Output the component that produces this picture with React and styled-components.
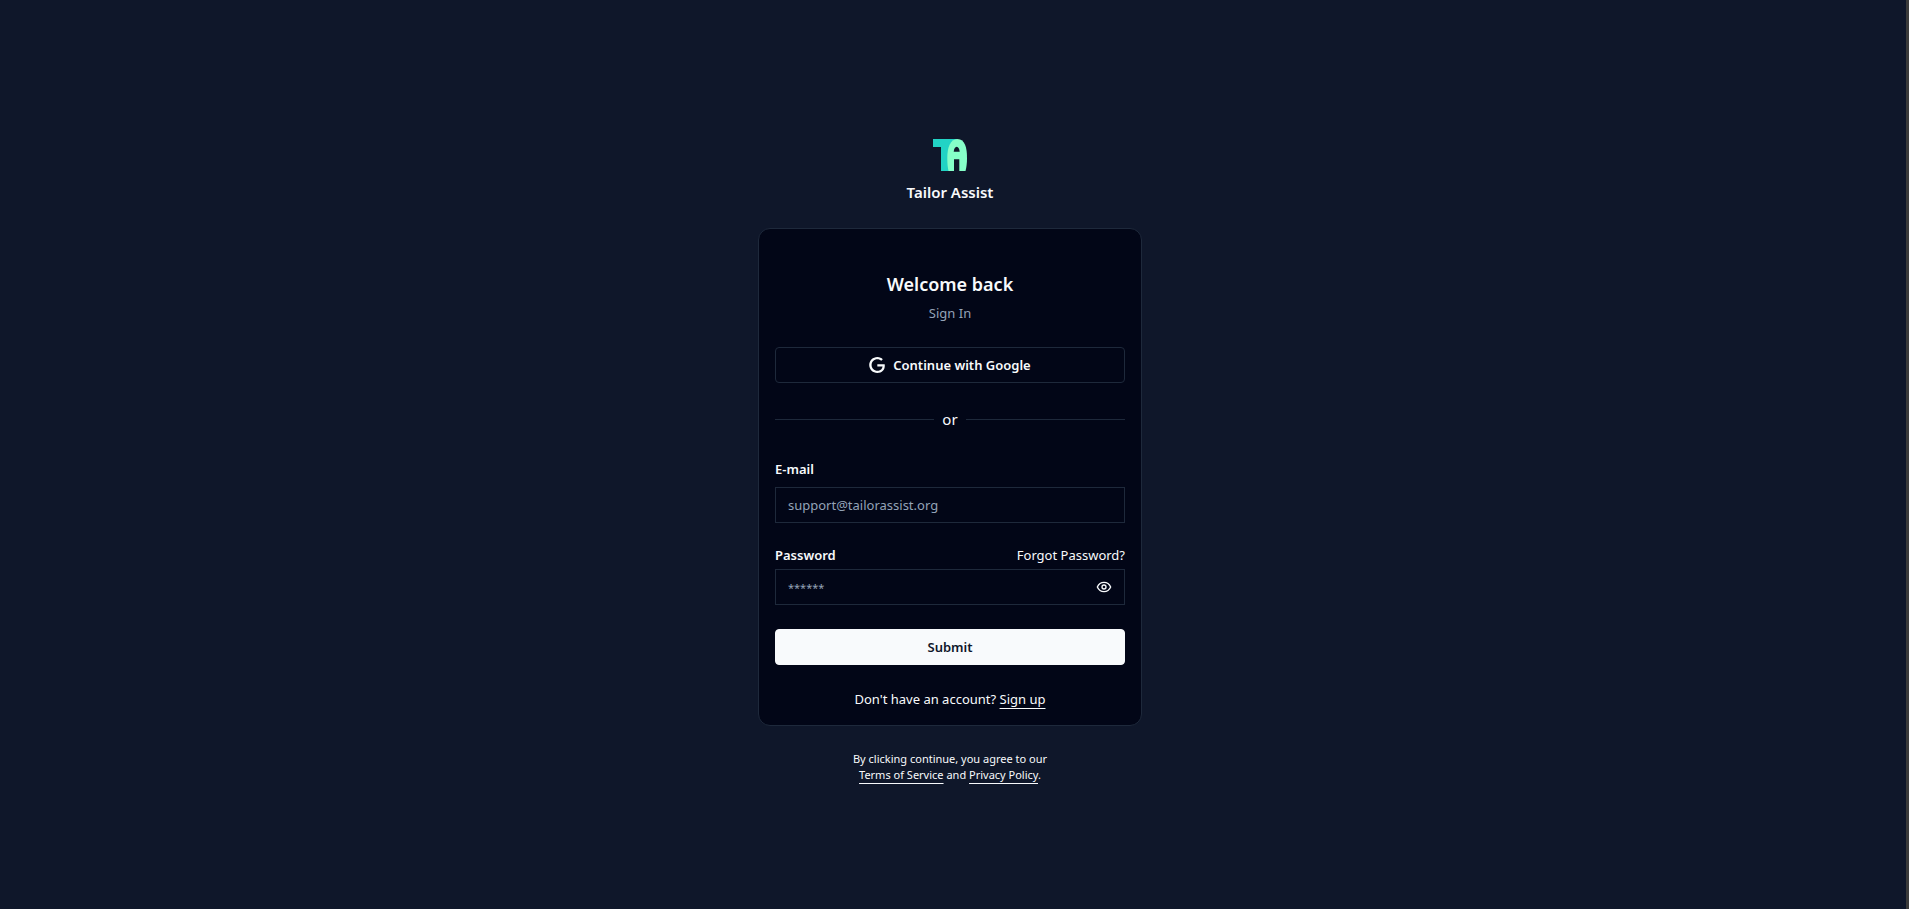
import React, { useState } from 'react';
import styled, { createGlobalStyle, ThemeProvider } from 'styled-components';

const theme = {
  color: {
    page: '#0f172a',
    card: '#020617',
    border: '#1e293b',
    text: '#f8fafc',
    muted: '#94a3b8',
    track: '#3b3b3b',
    teal: '#22d3c5',
    mint: '#86ffc8',
  },
};

const GlobalStyle = createGlobalStyle`
  * {
    box-sizing: border-box;
  }

  body {
    margin: 0;
    background: ${theme.color.page};
    color: ${theme.color.text};
    font-family: 'Segoe UI', 'Noto Sans', sans-serif;
    font-size: 13px;
    line-height: 20px;
  }
`;

const Page = styled.main`
  min-height: 100vh;
  display: flex;
  flex-direction: column;
  align-items: center;
  justify-content: center;
  padding: 12px 6px 0 0;
  border-right: 3px solid ${({ theme }) => theme.color.track};
`;

const Brand = styled.div`
  display: flex;
  flex-direction: column;
  align-items: center;
  gap: 8px;
  margin-bottom: 24px;
`;

const BrandName = styled.span`
  font-size: 15px;
  font-weight: 600;
  line-height: 24px;
`;

const Card = styled.section`
  width: 100%;
  max-width: 384px;
  padding: 40px 16px 16px;
  background: ${({ theme }) => theme.color.card};
  border: 1px solid ${({ theme }) => theme.color.border};
  border-radius: 12px;
`;

const CardHeader = styled.header`
  display: flex;
  flex-direction: column;
  gap: 4px;
  margin-bottom: 24px;
  text-align: center;
`;

const Title = styled.h1`
  margin: 0;
  font-size: 18px;
  font-weight: 600;
  line-height: 30px;
`;

const Subtitle = styled.p`
  margin: 0;
  color: ${({ theme }) => theme.color.muted};
`;

const Button = styled.button`
  display: flex;
  align-items: center;
  justify-content: center;
  gap: 8px;
  width: 100%;
  height: 36px;
  border: 1px solid ${({ theme, $primary }) => ($primary ? theme.color.text : theme.color.border)};
  border-radius: 4px;
  background: ${({ theme, $primary }) => ($primary ? theme.color.text : 'transparent')};
  color: ${({ theme, $primary }) => ($primary ? theme.color.page : theme.color.text)};
  font-family: inherit;
  font-size: 13px;
  font-weight: 600;
  cursor: pointer;
`;

const Divider = styled.div`
  display: flex;
  align-items: center;
  gap: 8px;
  margin: 24px 0 28px;
  font-size: 15px;
  line-height: 24px;

  &::before,
  &::after {
    content: '';
    flex: 1;
    height: 1px;
    background: ${({ theme }) => theme.color.border};
  }
`;

const Form = styled.form`
  display: flex;
  flex-direction: column;
  gap: 24px;
`;

const Fields = styled.div`
  display: flex;
  flex-direction: column;
  gap: 22px;
`;

const Field = styled.div`
  display: flex;
  flex-direction: column;
  gap: ${({ $gap }) => $gap}px;
`;

const LabelRow = styled.div`
  display: flex;
  justify-content: space-between;
`;

const Label = styled.label`
  font-weight: 600;
`;

const ForgotLink = styled.a`
  color: inherit;
  text-decoration: none;
`;

const InputBox = styled.div`
  display: flex;
  align-items: center;
  height: 36px;
  padding: 0 12px;
  border: 1px solid ${({ theme }) => theme.color.border};
`;

const Input = styled.input`
  flex: 1;
  min-width: 0;
  padding: 0;
  border: 0;
  outline: 0;
  background: transparent;
  color: inherit;
  font-family: inherit;
  font-size: 13px;

  &::placeholder {
    color: ${({ theme }) => theme.color.muted};
    font-size: ${({ $small }) => ($small ? 11 : 13)}px;
    opacity: 1;
  }
`;

const IconButton = styled.button`
  display: flex;
  padding: 0;
  border: 0;
  background: transparent;
  color: inherit;
  cursor: pointer;
`;

const SignUp = styled.p`
  margin: 24px 0 0;
  text-align: center;
`;

const TextLink = styled.a`
  color: inherit;
  text-decoration: underline;
  text-decoration-thickness: 1px;
  text-underline-offset: 4px;
  text-decoration-skip-ink: none;
`;

const Terms = styled.p`
  margin: 25px 0 0;
  font-size: 11px;
  line-height: 16px;
  text-align: center;
`;

const Logo = () => (
  <svg width="36" height="34" viewBox="0 0 36 34" aria-hidden="true">
    <path fill={theme.color.teal} d="M1 1h24v32H9V9H1z" />
    <path
      fill={theme.color.mint}
      d="M16.500 33C15.800 30 15.300 26 15.300 20 15.300 10 18 1 25.500 1S35 10 35 20c0 5-.5 9-1.500 13z"
    />
    <path fill={theme.color.page} d="M21.700 13.700c.3-2.700 1.300-5 3-5s2.700 2.300 3 5zM22 21.300h5.300V33H22z" />
  </svg>
);

const GoogleIcon = () => (
  <svg width="16" height="16" viewBox="0 0 24 24" fill="currentColor" aria-hidden="true">
    <path d="M12.480 10.920v3.280h7.840c-.24 1.840-.853 3.187-1.787 4.133-1.147 1.147-2.933 2.400-6.053 2.400-4.827 0-8.600-3.893-8.600-8.720s3.773-8.720 8.600-8.720c2.600 0 4.507 1.027 5.907 2.347l2.307-2.307C18.747 1.440 16.133 0 12.480 0 5.867 0 .307 5.387.307 12s5.560 12 12.173 12c3.573 0 6.267-1.173 8.373-3.360 2.160-2.160 2.840-5.213 2.840-7.667 0-.76-.053-1.467-.173-2.053H12.480z" />
  </svg>
);

const EyeIcon = () => (
  <svg
    width="16"
    height="16"
    viewBox="0 0 24 24"
    fill="none"
    stroke="currentColor"
    strokeWidth="2"
    strokeLinecap="round"
    strokeLinejoin="round"
    aria-hidden="true"
  >
    <path d="M2 12s3-7 10-7 10 7 10 7-3 7-10 7-10-7-10-7Z" />
    <circle cx="12" cy="12" r="3" />
  </svg>
);

const App = () => {
  const [visible, setVisible] = useState(false);

  return (
    <ThemeProvider theme={theme}>
      <GlobalStyle />
      <Page>
        <Brand>
          <Logo />
          <BrandName>Tailor Assist</BrandName>
        </Brand>
        <Card>
          <CardHeader>
            <Title>Welcome back</Title>
            <Subtitle>Sign In</Subtitle>
          </CardHeader>
          <Button type='button'>
            <GoogleIcon />
            Continue with Google
          </Button>
          <Divider>or</Divider>
          <Form onSubmit={(e) => e.preventDefault()}>
            <Fields>
              <Field $gap={8}>
                <Label htmlFor='email'>E-mail</Label>
                <InputBox>
                  <Input id='email' type='email' placeholder='support@tailorassist.org' />
                </InputBox>
              </Field>
              <Field $gap={4}>
                <LabelRow>
                  <Label htmlFor='password'>Password</Label>
                  <ForgotLink href='#forgot'>Forgot Password?</ForgotLink>
                </LabelRow>
                <InputBox>
                  <Input id='password' type={visible ? 'text' : 'password'} placeholder='******' $small />
                  <IconButton type='button' aria-label='Show password' onClick={() => setVisible(!visible)}>
                    <EyeIcon />
                  </IconButton>
                </InputBox>
              </Field>
            </Fields>
            <Button type='submit' $primary>Submit</Button>
          </Form>
          <SignUp>
            Don't have an account? <TextLink href='#signup'>Sign up</TextLink>
          </SignUp>
        </Card>
        <Terms>
          By clicking continue, you agree to our
          <br />
          <TextLink href='#terms'>Terms of Service</TextLink> and <TextLink href='#privacy'>Privacy Policy</TextLink>.
        </Terms>
      </Page>
    </ThemeProvider>
  );
};

export default App;
